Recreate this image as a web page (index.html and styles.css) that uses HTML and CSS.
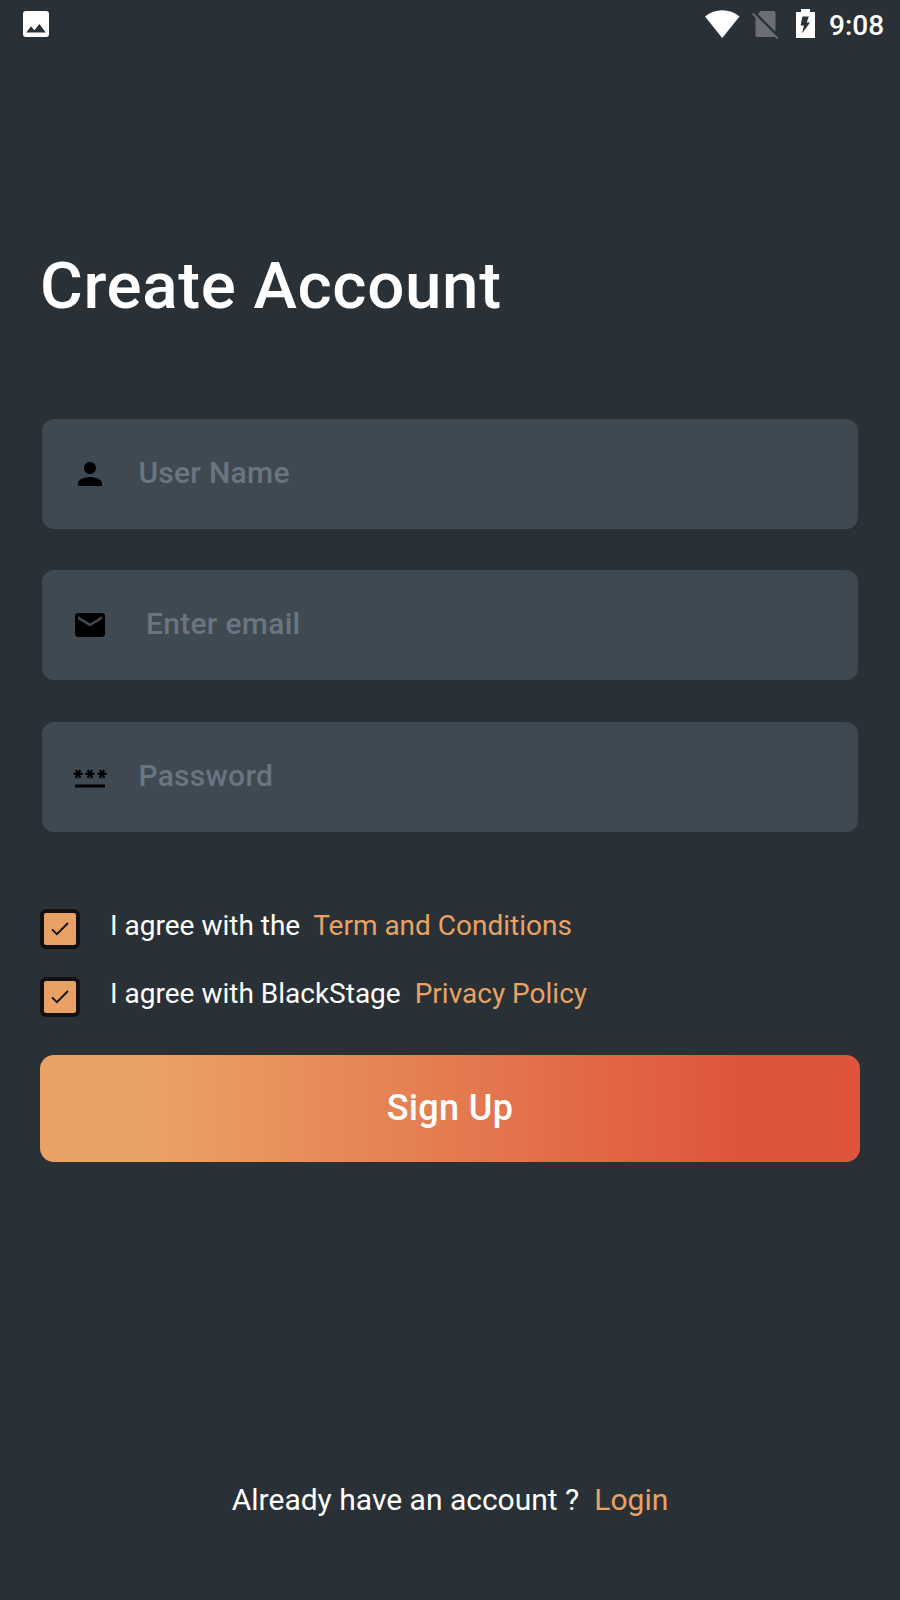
FILE: index.html
```html
<!DOCTYPE html>
<html lang="en">
<head>
<meta charset="utf-8">
<title>Create Account</title>
<link rel="stylesheet" href="styles.css">
</head>
<body>
<div class="screen">
  <header class="status-bar">
    <svg class="status-image" width="26" height="26" viewBox="0 0 26 26"><rect width="26" height="26" rx="3" fill="#fff"/><path d="M3.3 21.6 8 15.3l3.4 4 5-6.3 6.4 8.6z" fill="#293137"/></svg>
    <div class="status-right">
      <svg class="wifi" width="35" height="29" viewBox="0 0 35 29"><path d="M0 6.5C5 2.4 11 .3 17.2.3S29.500 2.400 34.500 6.500L17.200 28z" fill="#fff"/></svg>
      <svg class="sim" width="27" height="29" viewBox="0 0 27 29"><path d="M8.600 1H21.500a2 2 0 0 1 2 2V21.700L5.900 4.100zM3.500 7 22.800 26.300 21.500 27H5.500a2 2 0 0 1-2-2z" fill="#6b6f73"/><path d="M.8 3.600 25.600 28.400" stroke="#6b6f73" stroke-width="2"/></svg>
      <svg class="battery" width="19" height="29" viewBox="0 0 19 29"><path d="M5 0h9v3h5v26H0V3h5z" fill="#fff"/><path d="M6.400 7.500h6.500l-2.200 6h3.400L6 24.600l1.900-8.200H4.600z" fill="#293137"/></svg>
      <span class="clock">9:08</span>
    </div>
  </header>

  <main class="content">
    <h1 class="title">Create Account</h1>

    <form class="form">
      <label class="field">
        <svg class="field-icon" viewBox="0 0 24 24"><path d="M12 12c2.210 0 4-1.790 4-4s-1.790-4-4-4-4 1.790-4 4 1.790 4 4 4zm0 2c-2.670 0-8 1.340-8 4v2h16v-2c0-2.660-5.330-4-8-4z"/></svg>
        <span class="hint hint-name">User Name</span>
      </label>
      <label class="field">
        <svg class="field-icon" viewBox="0 0 24 24"><path d="M20 4H4c-1.100 0-1.990.9-1.990 2L2 18c0 1.100.9 2 2 2h16c1.100 0 2-.9 2-2V6c0-1.100-.9-2-2-2zm0 4l-8 5-8-5V6l8 5 8-5v2z"/></svg>
        <span class="hint hint-email">Enter email</span>
      </label>
      <label class="field">
        <svg class="field-icon" viewBox="0 0 24 24"><path d="M2 17h20v2H2v-2zm1.150-4.050L4 11.470l.85 1.480 1.300-.75-.85-1.480H7v-1.500H5.300l.85-1.470L4.850 7 4 8.470 3.150 7l-1.300.75.85 1.470H1v1.500h1.700l-.85 1.480 1.300.75zm6.700-.75l1.300.75.85-1.480.85 1.480 1.300-.75-.85-1.480H15v-1.500h-1.700l.85-1.470-1.300-.75L12 8.470 11.150 7l-1.300.75.85 1.470H9v1.500h1.700l-.85 1.480zM23 9.220h-1.700l.85-1.470-1.300-.75L20 8.470 19.150 7l-1.300.75.85 1.470H17v1.500h1.700l-.85 1.480 1.300.75.85-1.480.85 1.480 1.300-.75-.85-1.480H23v-1.500z"/></svg>
        <span class="hint hint-password">Password</span>
      </label>
    </form>

    <div class="agreements">
      <div class="agree">
        <span class="checkbox"><svg width="18" height="14" viewBox="0 0 18 14"><path d="M1 7.400 5.900 12.100 17 1" fill="none" stroke="#111" stroke-width="1.900"/></svg></span>
        <span class="agree-text">I agree with the</span><span class="agree-text link terms">Term and Conditions</span>
      </div>
      <div class="agree">
        <span class="checkbox"><svg width="18" height="14" viewBox="0 0 18 14"><path d="M1 7.400 5.900 12.100 17 1" fill="none" stroke="#111" stroke-width="1.900"/></svg></span>
        <span class="agree-text">I agree with BlackStage</span><span class="agree-text link privacy">Privacy Policy</span>
      </div>
    </div>

    <button class="signup" type="button">Sign Up</button>
  </main>

  <footer class="footer"><span>Already have an account ?</span><span class="link">Login</span></footer>
</div>
</body>
</html>
```
FILE: styles.css
```css
* { box-sizing: border-box; }
body {
  margin: 0;
  background: #293137;
  color: #fff;
  font-family: Roboto, sans-serif;
}
.screen {
  width: 900px;
  height: 1600px;
  display: flex;
  flex-direction: column;
  overflow: hidden;
}
svg { display: block; flex: none; }
.status-bar {
  height: 50px;
  padding-left: 23px;
  display: flex;
  justify-content: space-between;
  align-items: flex-start;
}
.status-image { margin-top: 11px; }
.status-right { display: flex; width: 195px; height: 50px; }
.wifi { margin-top: 10px; }
.sim { margin: 10px 0 0 12px; }
.battery { margin: 9px 0 0 17px; }
.clock {
  margin-left: 14px;
  font-size: 28px;
  line-height: 52px;
  font-weight: 500;
}
.content { padding: 0 40px; }
.title {
  margin: 193px 0 0;
  font-size: 65.500px;
  line-height: 86px;
  font-weight: 500;
  letter-spacing: .65px;
  white-space: nowrap;
}
.form {
  margin: 89.600px 2px 0;
  display: grid;
  gap: 41.700px;
}
.field {
  height: 110px;
  border-radius: 12px;
  background: #3f4952;
  display: flex;
  align-items: center;
  padding-left: 30px;
}
.field-icon { width: 36px; height: 36px; fill: #000; }
.hint {
  margin: -3px 0 0 30.400px;
  font-size: 30px;
  line-height: 40px;
  font-weight: 500;
  letter-spacing: .28px;
  color: #697580;
}
.hint-name, .hint-password { margin-top: -1.400px; }
.hint-email { margin-left: 38px; }
.agreements {
  margin-top: 77.300px;
  display: grid;
  gap: 28px;
}
.agree { display: flex; height: 40px; white-space: nowrap; }
.checkbox {
  width: 40px;
  height: 40px;
  margin-right: 30px;
  border: 4px solid #111;
  border-radius: 6px;
  background: #eaa164;
  display: grid;
  place-items: center;
}
.agree-text { font-size: 28px; line-height: 33px; }
.link { color: #eaa164; }
.terms { margin-left: 13px; }
.privacy { margin-left: 14px; }
.signup {
  display: block;
  width: 820px;
  height: 107px;
  margin-top: 37.600px;
  padding: 0;
  border: 0;
  border-radius: 14px;
  background: linear-gradient(90deg, #eaa164 15%, #df553b 85%);
  color: #fff;
  font: 500 36px/107px Roboto, sans-serif;
  letter-spacing: .35px;
}
.footer {
  margin-top: 318px;
  display: flex;
  justify-content: center;
  gap: 15px;
  font-size: 30px;
  line-height: 40px;
  white-space: nowrap;
}
```
